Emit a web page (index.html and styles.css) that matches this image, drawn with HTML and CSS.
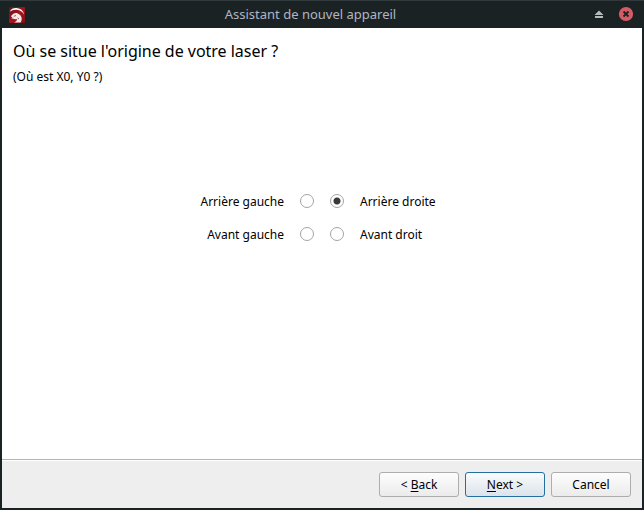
FILE: index.html
```html
<!DOCTYPE html>
<html lang="fr">
<head>
<meta charset="utf-8">
<title>Assistant de nouvel appareil</title>
<link rel="stylesheet" href="styles.css">
</head>
<body>
<div class="window">
  <header class="titlebar">
    <svg class="app-icon" viewBox="0 0 16 16" width="16" height="16">
      <defs><linearGradient id="red" x1="0" y1="0" x2="1" y2="1"><stop offset="0" stop-color="#5c1519"/><stop offset=".5" stop-color="#a8141c"/><stop offset="1" stop-color="#7c1015"/></linearGradient></defs>
      <rect width="16" height="16" rx="1" fill="url(#red)"/>
      <path d="M0.800 4.800C2 1.600 5.500 .7 8.500 1.200C12 1.800 14.800 4 15 7.500C13.500 4.500 11 3 8 2.700C5 2.400 2.600 3 .8 4.800Z" fill="#fff"/>
      <path d="M2 9.500C3.200 7.200 5.200 5.700 7.800 6L10.500 7.500C13 9.500 13.500 12.500 11.500 15.500H5.200C7 14.700 8.200 13.500 8 12C6.500 12.600 5 12.200 3.800 11.500L2.300 11.700L3.500 10.400Z" fill="#f4e9e9"/>
      <path d="M4.800 9.300L7 8.500M8.500 11L10 12" stroke="#9b3338" stroke-width=".8"/>
    </svg>
    <span class="title">Assistant de nouvel appareil</span>
    <svg class="controls" width="40" height="16" viewBox="0 0 40 16"><path d="M0.500 9L5 4.500L9.500 9ZM1 10h8v2H1Z" fill="#b0bdbb"/><circle cx="32" cy="8" r="7.100" fill="#d55c65"/><path d="M29.500 5.500l5 5M34.500 5.500l-5 5" stroke="#1b2224" stroke-width="1.800"/></svg>
  </header>
  <main class="page">
    <h1>Où se situe l'origine de votre laser ?</h1>
    <p class="subtitle">(Où est X0, Y0 ?)</p>
    <div class="origins">
      <span class="left">Arrière gauche</span><i class="radio"></i><i class="radio checked"></i><span class="right">Arrière droite</span>
      <span class="left">Avant gauche</span><i class="radio"></i><i class="radio"></i><span class="right">Avant droit</span>
    </div>
  </main>
  <footer class="actions">
    <button>&lt; <u>B</u>ack</button>
    <button class="default"><u>N</u>ext &gt;</button>
    <button>Cancel</button>
  </footer>
</div>
</body>
</html>
```
FILE: styles.css
```css
* { box-sizing: border-box; }
body { margin: 0; font: 12px/16px "Noto Sans", sans-serif; color: #000; }
.window { width: 644px; height: 510px; padding: 0 2px 2px; background: #1b2224; display: flex; flex-direction: column; }
.titlebar { height: 28px; flex: none; display: grid; grid-template-columns: 40px 1fr 48px; align-items: center; margin: 0 -2px; padding: 0 2px 0 9px; border-top: 1px solid #30393b; color: #afb6c2; }
.title { text-align: center; font-size: 13px; margin-left: -22px; margin-top: -1px; }
.controls { margin-top: -1px; }
.page { flex: 1; background: #fff; padding: 12px 11px; }
h1 { margin: 0; font-size: 16px; line-height: 22px; font-weight: 400; letter-spacing: -0.02px; }
.subtitle { margin: 6px 0 0; padding-top: 1px; }
.origins { margin-top: 108px; display: grid; grid-template-columns: 271px 14px 14px auto; column-gap: 16px; row-gap: 17px; align-items: center; }
.left, .right { padding-top: 1px; margin-bottom: -1px; }
.left { text-align: right; }
.radio { width: 14px; height: 14px; border: 1px solid #a4a4a4; border-radius: 50%; background: #fff; }
.checked { background: radial-gradient(circle, #3a3a3a 3px, #fff 4px); }
.actions { height: 49px; flex: none; background: #eee; border-top: 1px solid #b4b4b4; box-shadow: inset 0 1px #fff; display: flex; justify-content: flex-end; gap: 6px; padding: 12px 11px 0; }
button { width: 80px; height: 25px; font: inherit; color: #000; border: 1px solid #adadad; border-radius: 3px; background: linear-gradient(#fdfdfd, #ebebeb); padding: 0; }
.default { border-color: #236f9f; background: linear-gradient(#fafbfc, #dbe3ea); }
u { text-underline-offset: 2px; text-decoration-thickness: 1px; text-decoration-skip-ink: none; }
```
